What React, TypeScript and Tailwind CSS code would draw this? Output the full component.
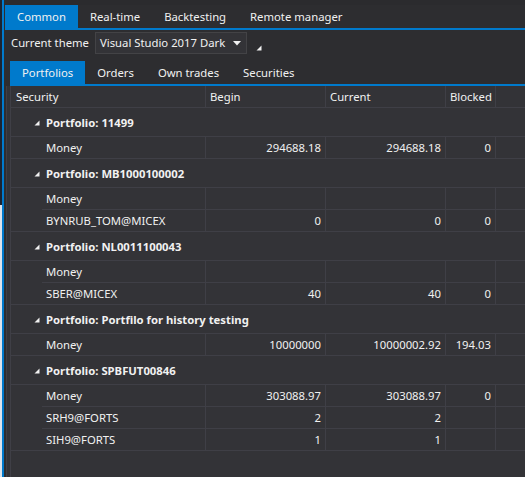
import React from 'react';

type Row = { name: string; begin?: string; current?: string; blocked?: string };
type Group = { title: string; rows: Row[] };

const groups: Group[] = [
    { title: 'Portfolio: 11499', rows: [{ name: 'Money', begin: '294688.18', current: '294688.18', blocked: '0' }] },
    {
        title: 'Portfolio: MB1000100002',
        rows: [{ name: 'Money' }, { name: 'BYNRUB_TOM@MICEX', begin: '0', current: '0', blocked: '0' }],
    },
    {
        title: 'Portfolio: NL0011100043',
        rows: [{ name: 'Money' }, { name: 'SBER@MICEX', begin: '40', current: '40', blocked: '0' }],
    },
    {
        title: 'Portfolio: Portfilo for history testing',
        rows: [{ name: 'Money', begin: '10000000', current: '10000002.92', blocked: '194.03' }],
    },
    {
        title: 'Portfolio: SPBFUT00846',
        rows: [
            { name: 'Money', begin: '303088.97', current: '303088.97', blocked: '0' },
            { name: 'SRH9@FORTS', begin: '2', current: '2' },
            { name: 'SIH9@FORTS', begin: '1', current: '1' },
        ],
    },
];

// acik grup ucgeni
function Expander() {
    return (
        <svg width="6" height="6" viewBox="0 0 6 6" className="mr-[6px]">
            <polygon points="5.5,0.5 5.5,5.5 0.5,5.5" fill="#f1f1f1" />
        </svg>
    );
}

function Tab({ label, active }: { label: string; active?: boolean }) {
    return (
        <div className={`px-[12px] flex items-center whitespace-nowrap ${active ? 'bg-[#007acc]' : ''}`}>{label}</div>
    );
}

export default function App() {
    return (
        <div
            className="w-[525px] h-[477px] flex bg-[#2d2d30] overflow-hidden text-[11.3px] text-[#f1f1f1] leading-none"
            style={{ fontFamily: '"Noto Sans", "Open Sans", sans-serif' }}
        >
            <div className="w-[2px] flex flex-col">
                <div className="h-[205px] bg-[#1b2330]" />
                <div className="flex-1 bg-[#dde4ec]" />
            </div>
            <div className="w-[2px] bg-[#007acc]" />
            <div className="flex-1 flex flex-col min-w-0">
                <div className="h-[5px] bg-[#2b2b2e]" />
                <div className="flex h-[23px] ml-[1px]">
                    <Tab label="Common" active />
                    <Tab label="Real-time" />
                    <Tab label="Backtesting" />
                    <Tab label="Remote manager" />
                </div>
                <div className="h-[2px] bg-[#007acc] ml-[1px]" />
                <div className="flex items-center h-[24px] mt-[1px] pl-[7px] whitespace-nowrap">
                    <span>Current theme</span>
                    <div className="ml-[6px] w-[152px] h-[22px] border border-[#434346] bg-[#333337] flex items-center pl-[4px] pr-[5px]">
                        <span className="flex-1">Visual Studio 2017 Dark</span>
                        <svg width="8" height="5" viewBox="0 0 8 5">
                            <polygon points="0,0 8,0 4,4.5" fill="#f1f1f1" />
                        </svg>
                    </div>
                    <svg width="6" height="6" viewBox="0 0 6 6" className="ml-[9px] mt-[10px]">
                        <polygon points="5.5,0.5 5.5,5.5 0.5,5.5" fill="#f1f1f1" />
                    </svg>
                </div>
                <div className="flex h-[23px] ml-[6px] mt-[6px]">
                    <Tab label="Portfolios" active />
                    <Tab label="Orders" />
                    <Tab label="Own trades" />
                    <Tab label="Securities" />
                </div>
                <div className="h-[2px] bg-[#007acc] ml-[6px]" />
                <div className="flex-1 flex min-h-0">
                    <div className="w-[2px]" />
                    <div className="w-[1px] bg-[#3f3f46]" />
                    <div className="w-[3px] bg-[#333337]" />
                    <div className="w-[1px] bg-[#3f3f46]" />
                    <div className="flex-1 bg-[#333337] flex flex-col min-w-0 whitespace-nowrap">
                        <div className="flex h-[22px] border-b border-[#3f3f46] shrink-0">
                            <div className="w-[195px] shrink-0 pl-[5px] flex items-center border-r border-[#3f3f46]">Security</div>
                            <div className="w-[120px] shrink-0 pl-[4px] flex items-center border-r border-[#3f3f46]">Begin</div>
                            <div className="w-[120px] shrink-0 pl-[4px] flex items-center border-r border-[#3f3f46]">Current</div>
                            <div className="w-[50px] shrink-0 pl-[4px] flex items-center border-r border-[#3f3f46]">Blocked</div>
                            <div className="flex-1" />
                        </div>
                        {groups.map(g => (
                            <div key={g.title}>
                                <div className="h-[29px] border-b border-[#3f3f46] flex items-center pl-[23px] pt-[1px] font-bold">
                                    <Expander />
                                    {g.title}
                                </div>
                                {g.rows.map((r, i) => (
                                    <div
                                        key={r.name + i}
                                        className={`flex h-[22px] ${i === g.rows.length - 1 ? 'border-b border-[#3f3f46]' : ''}`}
                                    >
                                        <div className="w-[31px] shrink-0" />
                                        <div className={`flex flex-1 ${i === g.rows.length - 1 ? '' : 'border-b border-[#3f3f46]'}`}>
                                            <div className="w-[164px] shrink-0 pl-[4px] flex items-center border-r border-[#3f3f46]">{r.name}</div>
                                            <div className="w-[120px] shrink-0 pr-[4px] flex items-center justify-end border-r border-[#3f3f46]">{r.begin}</div>
                                            <div className="w-[120px] shrink-0 pr-[4px] flex items-center justify-end border-r border-[#3f3f46]">{r.current}</div>
                                            <div className="w-[50px] shrink-0 pr-[4px] flex items-center justify-end border-r border-[#3f3f46]">{r.blocked}</div>
                                            <div className="flex-1" />
                                        </div>
                                    </div>
                                ))}
                            </div>
                        ))}
                    </div>
                </div>
            </div>
        </div>
    );
}
